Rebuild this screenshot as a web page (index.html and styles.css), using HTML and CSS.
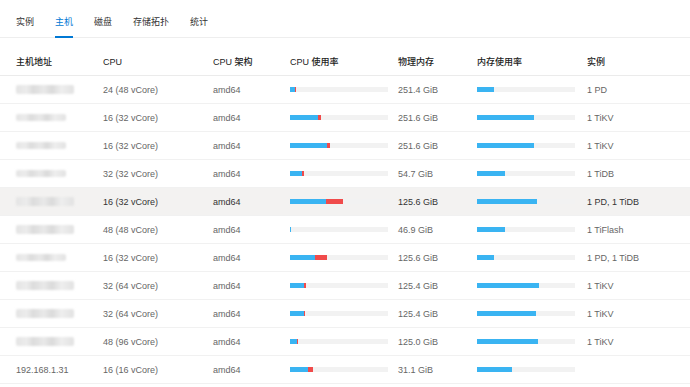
FILE: index.html
```html
<!DOCTYPE html>
<html lang="zh-CN">
<head>
    <meta charset="UTF-8">
    <title>主机</title>
    <link rel="stylesheet" href="styles.css">
</head>
<body>
    <nav class="tabs">
        <span class="tab">实例</span>
        <span class="tab active">主机</span>
        <span class="tab">磁盘</span>
        <span class="tab">存储拓扑</span>
        <span class="tab">统计</span>
    </nav>

    <div class="table">
        <div class="row head">
            <div class="cell">主机地址</div>
            <div class="cell">CPU</div>
            <div class="cell">CPU 架构</div>
            <div class="cell">CPU 使用率</div>
            <div class="cell">物理内存</div>
            <div class="cell">内存使用率</div>
            <div class="cell">实例</div>
        </div>

        <div class="row">
            <div class="cell"><span class="masked"></span></div>
            <div class="cell">24 (48 vCore)</div>
            <div class="cell">amd64</div>
            <div class="cell"><div class="bar"><span class="used" style="width: 5%"></span><span class="sys" style="width: 1.5%"></span></div></div>
            <div class="cell">251.4 GiB</div>
            <div class="cell"><div class="bar"><span class="used" style="width: 17%"></span></div></div>
            <div class="cell">1 PD</div>
        </div>
        <div class="row">
            <div class="cell"><span class="masked short"></span></div>
            <div class="cell">16 (32 vCore)</div>
            <div class="cell">amd64</div>
            <div class="cell"><div class="bar"><span class="used" style="width: 29%"></span><span class="sys" style="width: 3%"></span></div></div>
            <div class="cell">251.6 GiB</div>
            <div class="cell"><div class="bar"><span class="used" style="width: 58%"></span></div></div>
            <div class="cell">1 TiKV</div>
        </div>
        <div class="row">
            <div class="cell"><span class="masked short"></span></div>
            <div class="cell">16 (32 vCore)</div>
            <div class="cell">amd64</div>
            <div class="cell"><div class="bar"><span class="used" style="width: 38%"></span><span class="sys" style="width: 3%"></span></div></div>
            <div class="cell">251.6 GiB</div>
            <div class="cell"><div class="bar"><span class="used" style="width: 58%"></span></div></div>
            <div class="cell">1 TiKV</div>
        </div>
        <div class="row">
            <div class="cell"><span class="masked short"></span></div>
            <div class="cell">32 (32 vCore)</div>
            <div class="cell">amd64</div>
            <div class="cell"><div class="bar"><span class="used" style="width: 12%"></span><span class="sys" style="width: 2%"></span></div></div>
            <div class="cell">54.7 GiB</div>
            <div class="cell"><div class="bar"><span class="used" style="width: 29%"></span></div></div>
            <div class="cell">1 TiDB</div>
        </div>
        <div class="row hover">
            <div class="cell"><span class="masked"></span></div>
            <div class="cell">16 (32 vCore)</div>
            <div class="cell">amd64</div>
            <div class="cell"><div class="bar"><span class="used" style="width: 37%"></span><span class="sys" style="width: 17%"></span></div></div>
            <div class="cell">125.6 GiB</div>
            <div class="cell"><div class="bar"><span class="used" style="width: 61%"></span></div></div>
            <div class="cell">1 PD, 1 TiDB</div>
        </div>
        <div class="row">
            <div class="cell"><span class="masked"></span></div>
            <div class="cell">48 (48 vCore)</div>
            <div class="cell">amd64</div>
            <div class="cell"><div class="bar"><span class="used" style="width: 1.5%"></span></div></div>
            <div class="cell">46.9 GiB</div>
            <div class="cell"><div class="bar"><span class="used" style="width: 29%"></span></div></div>
            <div class="cell">1 TiFlash</div>
        </div>
        <div class="row">
            <div class="cell"><span class="masked short"></span></div>
            <div class="cell">16 (32 vCore)</div>
            <div class="cell">amd64</div>
            <div class="cell"><div class="bar"><span class="used" style="width: 26%"></span><span class="sys" style="width: 12%"></span></div></div>
            <div class="cell">125.6 GiB</div>
            <div class="cell"><div class="bar"><span class="used" style="width: 17%"></span></div></div>
            <div class="cell">1 PD, 1 TiDB</div>
        </div>
        <div class="row">
            <div class="cell"><span class="masked"></span></div>
            <div class="cell">32 (64 vCore)</div>
            <div class="cell">amd64</div>
            <div class="cell"><div class="bar"><span class="used" style="width: 14%"></span><span class="sys" style="width: 2%"></span></div></div>
            <div class="cell">125.4 GiB</div>
            <div class="cell"><div class="bar"><span class="used" style="width: 63%"></span></div></div>
            <div class="cell">1 TiKV</div>
        </div>
        <div class="row">
            <div class="cell"><span class="masked"></span></div>
            <div class="cell">32 (64 vCore)</div>
            <div class="cell">amd64</div>
            <div class="cell"><div class="bar"><span class="used" style="width: 14%"></span><span class="sys" style="width: 1.5%"></span></div></div>
            <div class="cell">125.4 GiB</div>
            <div class="cell"><div class="bar"><span class="used" style="width: 60%"></span></div></div>
            <div class="cell">1 TiKV</div>
        </div>
        <div class="row">
            <div class="cell"><span class="masked"></span></div>
            <div class="cell">48 (96 vCore)</div>
            <div class="cell">amd64</div>
            <div class="cell"><div class="bar"><span class="used" style="width: 7%"></span><span class="sys" style="width: 1.5%"></span></div></div>
            <div class="cell">125.0 GiB</div>
            <div class="cell"><div class="bar"><span class="used" style="width: 62%"></span></div></div>
            <div class="cell">1 TiKV</div>
        </div>
        <div class="row">
            <div class="cell">192.168.1.31</div>
            <div class="cell">16 (16 vCore)</div>
            <div class="cell">amd64</div>
            <div class="cell"><div class="bar"><span class="used" style="width: 18%"></span><span class="sys" style="width: 5%"></span></div></div>
            <div class="cell">31.1 GiB</div>
            <div class="cell"><div class="bar"><span class="used" style="width: 36%"></span></div></div>
            <div class="cell"></div>
        </div>
    </div>
</body>
</html>
```

FILE: styles.css
```css
/* Basic reset */
* {
    margin: 0;
    padding: 0;
    box-sizing: border-box;
}

body {
    font-family: "Liberation Sans", "Noto Sans CJK SC", sans-serif;
    font-size: 9px;
    color: #666;
    background-color: #fff;
}

/* Tabs */
.tabs {
    display: flex;
    gap: 21px;
    height: 38px;
    padding-left: 16px;
    border-bottom: 1px solid #eeeeee;
}

.tab {
    display: flex;
    align-items: center;
    height: 38px;
    padding-top: 7px;
    color: #333;
    border-bottom: 2px solid transparent;
}

.tab.active {
    color: #0078d4;
    border-bottom-color: #0078d4;
}

/* Table */
.table {
    margin-top: 10px;
}

.row {
    display: grid;
    grid-template-columns: 87px 110px 77px 108px 79px 110px 1fr;
    height: 28px;
    border-bottom: 1px solid #f1f1f1;
}

.row.head {
    color: #222;
    font-weight: 500;
    border-bottom-color: #ebebeb;
}

.row.hover {
    background-color: #f3f2f1;
    color: #333;
}

.cell {
    display: flex;
    align-items: center;
    padding-left: 16px;
    white-space: nowrap;
}

/* blurred host address */
.masked {
    display: block;
    width: 58px;
    height: 9px;
    border-radius: 2px;
    background: linear-gradient(90deg, #e4e4e4 0, #ececec 18%, #dcdcdc 30%, #e9e9e9 48%, #dadada 62%, #eeeeee 78%, #e2e2e2 100%);
    filter: blur(1px);
}

.masked.short {
    width: 50px;
    height: 7px;
}

/* usage bars */
.bar {
    display: flex;
    flex-shrink: 0;
    width: 98px;
    height: 5px;
    background-color: #f2f2f2;
}

.bar .used {
    background-color: #3ab4f2;
}

.bar .sys {
    background-color: #f04b4b;
}
```
